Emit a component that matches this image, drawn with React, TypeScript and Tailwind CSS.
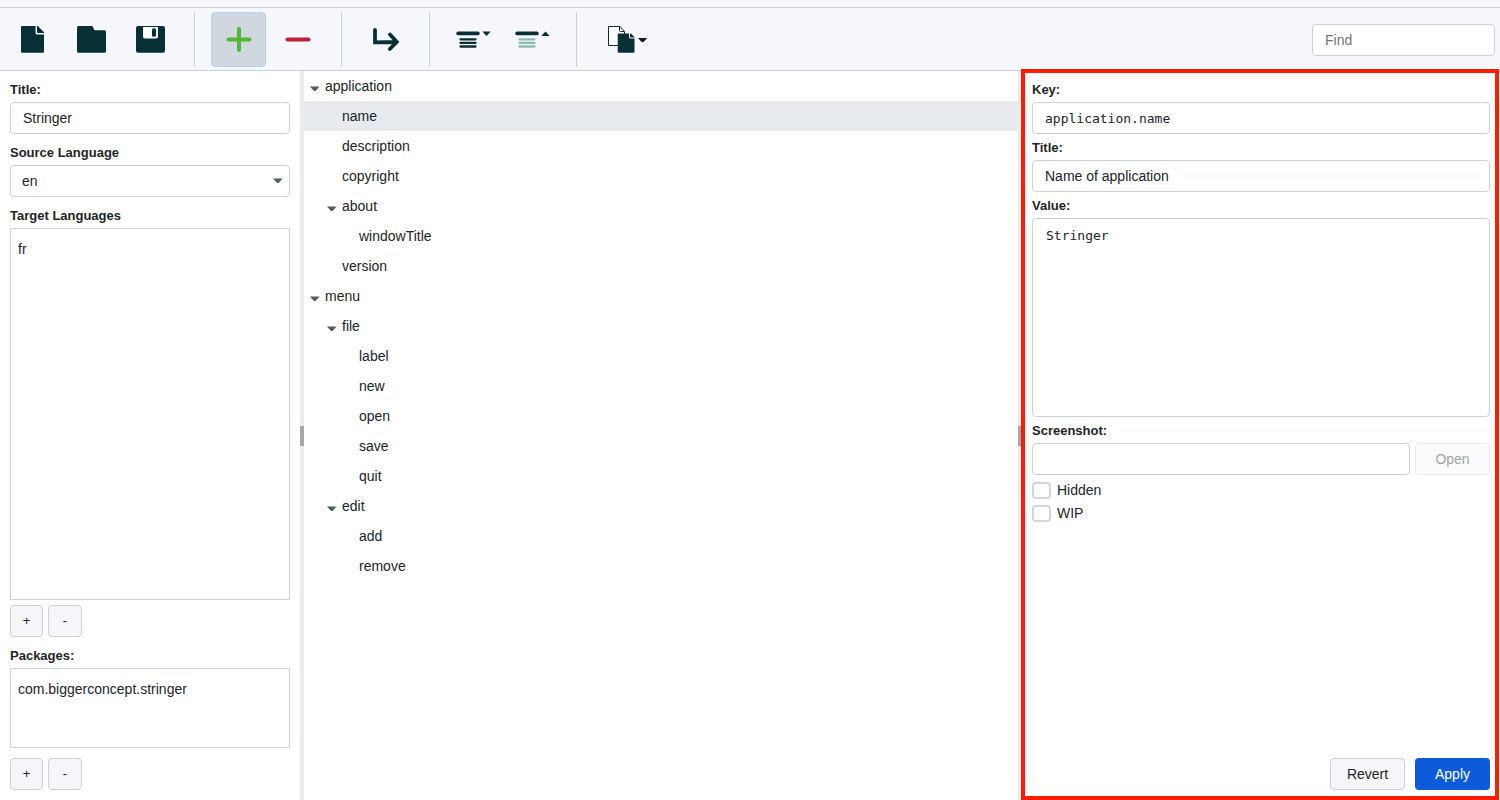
import { useState } from "react";
import type { ReactNode } from "react";

type TreeNode = {
  id: string;
  label: string;
  depth: 0 | 1 | 2;
  open?: boolean;
};

const NODES: TreeNode[] = [
  { id: "application", label: "application", depth: 0, open: true },
  { id: "application.name", label: "name", depth: 1 },
  { id: "application.description", label: "description", depth: 1 },
  { id: "application.copyright", label: "copyright", depth: 1 },
  { id: "application.about", label: "about", depth: 1, open: true },
  { id: "application.about.windowTitle", label: "windowTitle", depth: 2 },
  { id: "application.version", label: "version", depth: 1 },
  { id: "menu", label: "menu", depth: 0, open: true },
  { id: "menu.file", label: "file", depth: 1, open: true },
  { id: "menu.file.label", label: "label", depth: 2 },
  { id: "menu.file.new", label: "new", depth: 2 },
  { id: "menu.file.open", label: "open", depth: 2 },
  { id: "menu.file.save", label: "save", depth: 2 },
  { id: "menu.file.quit", label: "quit", depth: 2 },
  { id: "menu.edit", label: "edit", depth: 1, open: true },
  { id: "menu.edit.add", label: "add", depth: 2 },
  { id: "menu.edit.remove", label: "remove", depth: 2 },
];

const INDENT = {
  0: "pl-[6px]",
  1: "pl-[23px]",
  2: "pl-[40px]",
};

const fieldClass =
  "h-8 w-full min-w-0 rounded border border-[#c9d2db] bg-white px-3 outline-none placeholder:text-[#6c757d] placeholder:opacity-100";

const buttonClass =
  "h-8 rounded border border-[#c9d2db] bg-[#f5f6fa] text-center";

function Caret({ className = "" }: { className?: string }) {
  return (
    <svg width="10" height="6" viewBox="0 0 10 6" className={className} aria-hidden="true">
      <path d="M0 .5h9.500L6 4.600q-1.250 1-2.500 0z" fill="#4f5b66" />
    </svg>
  );
}

function ToolButton({
  label,
  active = false,
  wide = false,
  children,
}: {
  label: string;
  active?: boolean;
  wide?: boolean;
  children: ReactNode;
}) {
  return (
    <button
      type="button"
      aria-label={label}
      className={[
        "flex h-[55px] shrink-0 items-center justify-center rounded border",
        wide ? "w-[68px]" : "w-[55px]",
        active ? "border-[#b3d4f5] bg-[#d0d7df]" : "border-transparent",
      ].join(" ")}
    >
      {children}
    </button>
  );
}

function Separator() {
  return <div className="mx-3 h-[55px] w-px shrink-0 bg-[#c9d2d9]" />;
}

function Icon({ width = 37, children }: { width?: number; children: ReactNode }) {
  return (
    <svg
      width={width}
      height="37"
      viewBox={`0 0 ${width} 37`}
      className="shrink-0"
      fill="none"
      aria-hidden="true"
    >
      {children}
    </svg>
  );
}

function Toolbar() {
  return (
    <div className="flex items-center gap-1 border-y border-[#c9d2d9] bg-[#f5f7fb] px-[5px] pt-1 pb-[3px]">
      <ToolButton label="New">
        <Icon>
          <path
            d="M8 5h13.500v7q0 1.500 1.500 1.500h7v17q0 1.200-1.200 1.200H8.200Q7 31.700 7 30.500V6q0-1 1-1z"
            fill="#082f35"
          />
          <path d="M23 5v6q0 1 1 1h6v-.8L23.800 5z" fill="#082f35" />
        </Icon>
      </ToolButton>
      <ToolButton label="Open">
        <Icon>
          <path
            d="M5.500 5h13q1 0 1.500 1l1 2.500q.3.700 1 .7h9.500q1.500 0 1.500 1.500v19.500q0 1.500-1.500 1.500h-26Q4 31.700 4 30.200V6.500Q4 5 5.500 5z"
            fill="#082f35"
          />
        </Icon>
      </ToolButton>
      <ToolButton label="Save">
        <Icon>
          <rect x="4" y="5" width="29" height="26.700" rx="2.200" fill="#082f35" />
          <path d="M11 6h15v9.500q0 2-2 2H13q-2 0-2-2z" fill="#fff" />
          <rect x="20" y="7.200" width="4" height="8.600" rx="1.500" fill="#082f35" />
        </Icon>
      </ToolButton>
      <Separator />
      <ToolButton label="Add" active>
        <Icon>
          <path d="M19 7.900v21M8.500 18.400h21" stroke="#51b933" strokeWidth="4" strokeLinecap="round" />
        </Icon>
      </ToolButton>
      <ToolButton label="Remove">
        <Icon>
          <path d="M8.500 18.400h21" stroke="#c62036" strokeWidth="4" strokeLinecap="round" />
        </Icon>
      </ToolButton>
      <Separator />
      <ToolButton label="Move">
        <Icon>
          <path
            d="M8 9v12.400l21.300-.4M23 13.500l6.800 7.500-7 7"
            stroke="#082f35"
            strokeWidth="3.800"
            strokeLinecap="round"
            strokeLinejoin="miter"
          />
        </Icon>
      </ToolButton>
      <Separator />
      <ToolButton label="Expand all">
        <Icon>
          <path d="M3.200 12.400h19.600" stroke="#082f35" strokeWidth="3.800" strokeLinecap="round" />
          <path
            d="M5.500 18.300h15M5.500 21.800h15M5.500 25.500h15"
            stroke="#082f35"
            strokeWidth="2.300"
            strokeLinecap="round"
          />
          <path d="M27.300 10.500h8.400l-4.200 4.500z" fill="#082f35" />
        </Icon>
      </ToolButton>
      <ToolButton label="Collapse all">
        <Icon>
          <path d="M3.200 12.400h19.600" stroke="#082f35" strokeWidth="3.800" strokeLinecap="round" />
          <path
            d="M5.500 18.300h15M5.500 21.800h15M5.500 25.500h15"
            stroke="#8fbab9"
            strokeWidth="2.300"
            strokeLinecap="round"
          />
          <path d="M27.300 15h8.400l-4.200-4.500z" fill="#082f35" />
        </Icon>
      </ToolButton>
      <Separator />
      <ToolButton label="Copy" wide>
        <Icon width={42}>
          <path d="M2.500 5.500H14l4.500 5v14h-16z" fill="#fff" stroke="#082f35" />
          <path d="M13.500 5.500v4q0 1 1 1h4" stroke="#082f35" />
          <path
            d="M12.500 12.500H23V16q0 1.500 1.500 1.500h4v13.200q0 1-1 1h-15q-.8 0-.8-.8V13.300q0-.8.800-.8z"
            fill="#082f35"
          />
          <path d="M24 12.500v3.200q0 .8.800.8h3.700v-.5l-3.700-3.500z" fill="#082f35" />
          <path d="M32 17h9.200l-3.400 3.800q-1.200.9-2.400 0z" fill="#16191c" />
        </Icon>
      </ToolButton>
      <input
        type="search"
        aria-label="Find"
        placeholder="Find"
        className={`${fieldClass} ml-auto max-w-[183px]`}
      />
    </div>
  );
}

function Field({ label, htmlFor, children }: { label: string; htmlFor: string; children: ReactNode }) {
  return (
    <div className="flex flex-col gap-[2px]">
      <label htmlFor={htmlFor} className="text-[13px] leading-5 font-bold">
        {label}
      </label>
      {children}
    </div>
  );
}

function ListBox({ label, items, className }: { label: string; items: string[]; className: string }) {
  return (
    <div className={`flex flex-col gap-[2px] ${className}`}>
      <h2 className="text-[13px] leading-5 font-bold">{label}</h2>
      <ul className="flex-1 border border-[#c9d2db] bg-white px-[7px] py-[5px]">
        {items.map((item) => (
          <li key={item} className="truncate leading-[30px]">
            {item}
          </li>
        ))}
      </ul>
    </div>
  );
}

function AddRemove({ what }: { what: string }) {
  return (
    <div className="flex gap-[5px]">
      <button type="button" aria-label={`Add ${what}`} className={`${buttonClass} w-[33px] text-[13px]`}>
        +
      </button>
      <button type="button" aria-label={`Remove ${what}`} className={`${buttonClass} w-[34px] text-[13px]`}>
        -
      </button>
    </div>
  );
}

function ProjectPanel() {
  return (
    <aside className="flex min-h-0 flex-col px-[10px] pt-[9px] pb-[10px]">
      <div className="flex flex-col gap-[9px]">
        <Field label="Title:" htmlFor="project-title">
          <input id="project-title" defaultValue="Stringer" className={fieldClass} />
        </Field>
        <Field label="Source Language" htmlFor="source-language">
          <div className="relative">
            <select
              id="source-language"
              defaultValue="en"
              className="h-8 w-full appearance-none rounded border border-[#c9d2db] bg-white px-[11px] outline-none"
            >
              <option value="en">en</option>
              <option value="fr">fr</option>
            </select>
            <Caret className="pointer-events-none absolute top-[13px] right-[7px]" />
          </div>
        </Field>
      </div>
      <ListBox label="Target Languages" items={["fr"]} className="mt-[9px] mb-[5px] flex-1" />
      <AddRemove what="language" />
      <ListBox
        label="Packages:"
        items={["com.biggerconcept.stringer"]}
        className="mt-[9px] mb-[10px] h-[102px]"
      />
      <AddRemove what="package" />
    </aside>
  );
}

function Splitter() {
  return (
    <div className="flex items-center bg-[#ececec]">
      <div className="h-5 w-full bg-[#a2a9ae]" />
    </div>
  );
}

function StringTree() {
  const [selected, setSelected] = useState("application.name");

  return (
    <main className="min-h-0 min-w-0 overflow-hidden">
      <ul>
        {NODES.map((node) => (
          <li key={node.id}>
            <button
              type="button"
              onClick={() => setSelected(node.id)}
              className={[
                "flex h-[30px] w-full items-center text-left",
                INDENT[node.depth],
                node.id === selected ? "bg-[#e7eaef]" : "",
              ].join(" ")}
            >
              <span className="w-[15px] shrink-0 pt-[6px]">{node.open && <Caret />}</span>
              {node.label}
            </button>
          </li>
        ))}
      </ul>
    </main>
  );
}

function Check({ label }: { label: string }) {
  return (
    <label className="flex h-[22px] items-center gap-[6px]">
      <input
        type="checkbox"
        className="h-[17px] w-[19px] appearance-none rounded border-2 border-[#cfd6e0] bg-white checked:bg-[#0d5bd9]"
      />
      {label}
    </label>
  );
}

function DetailPanel() {
  return (
    <section className="relative flex min-h-0 flex-col gap-1 px-[10px] pt-[9px] pb-[10px]">
      {/* highlight frame, drawn over the toolbar edge and the splitter */}
      <div className="pointer-events-none absolute -top-[2px] right-px bottom-0 -left-px border-4 border-[#ff1c00]" />
      <Field label="Key:" htmlFor="key">
        <input
          id="key"
          defaultValue="application.name"
          className={`${fieldClass} font-['DejaVu_Sans_Mono',monospace] text-[13px]`}
        />
      </Field>
      <Field label="Title:" htmlFor="title">
        <input id="title" defaultValue="Name of application" className={fieldClass} />
      </Field>
      <Field label="Value:" htmlFor="value">
        <textarea
          id="value"
          defaultValue="Stringer"
          className="h-[199px] resize-none rounded border border-[#c9d2db] bg-white px-[13px] py-[7px] font-['DejaVu_Sans_Mono',monospace] text-[13px] leading-5 outline-none"
        />
      </Field>
      <Field label="Screenshot:" htmlFor="screenshot">
        <div className="flex gap-[5px]">
          <input id="screenshot" className={fieldClass} />
          <button
            type="button"
            disabled
            className="h-8 w-[75px] shrink-0 rounded border border-[#e9ecef] bg-[#fafbfc] text-[#a1a4a7]"
          >
            Open
          </button>
        </div>
      </Field>
      <div className="flex flex-col items-start gap-px">
        <Check label="Hidden" />
        <Check label="WIP" />
      </div>
      <div className="mt-auto flex justify-end gap-[10px]">
        <button type="button" className={`${buttonClass} w-[75px]`}>
          Revert
        </button>
        <button type="button" className="h-8 w-[75px] rounded bg-[#0d5bd9] text-white">
          Apply
        </button>
      </div>
    </section>
  );
}

export default function App() {
  return (
    <div className="flex h-screen flex-col bg-white font-['Liberation_Sans',Arial,sans-serif] text-sm text-[#212529]">
      <header className="bg-[#f5f7fb] pt-[7px]">
        <Toolbar />
      </header>
      <div className="grid min-h-0 flex-1 grid-cols-[300px_4px_minmax(0,1fr)_4px_478px]">
        <ProjectPanel />
        <Splitter />
        <StringTree />
        <Splitter />
        <DetailPanel />
      </div>
    </div>
  );
}
